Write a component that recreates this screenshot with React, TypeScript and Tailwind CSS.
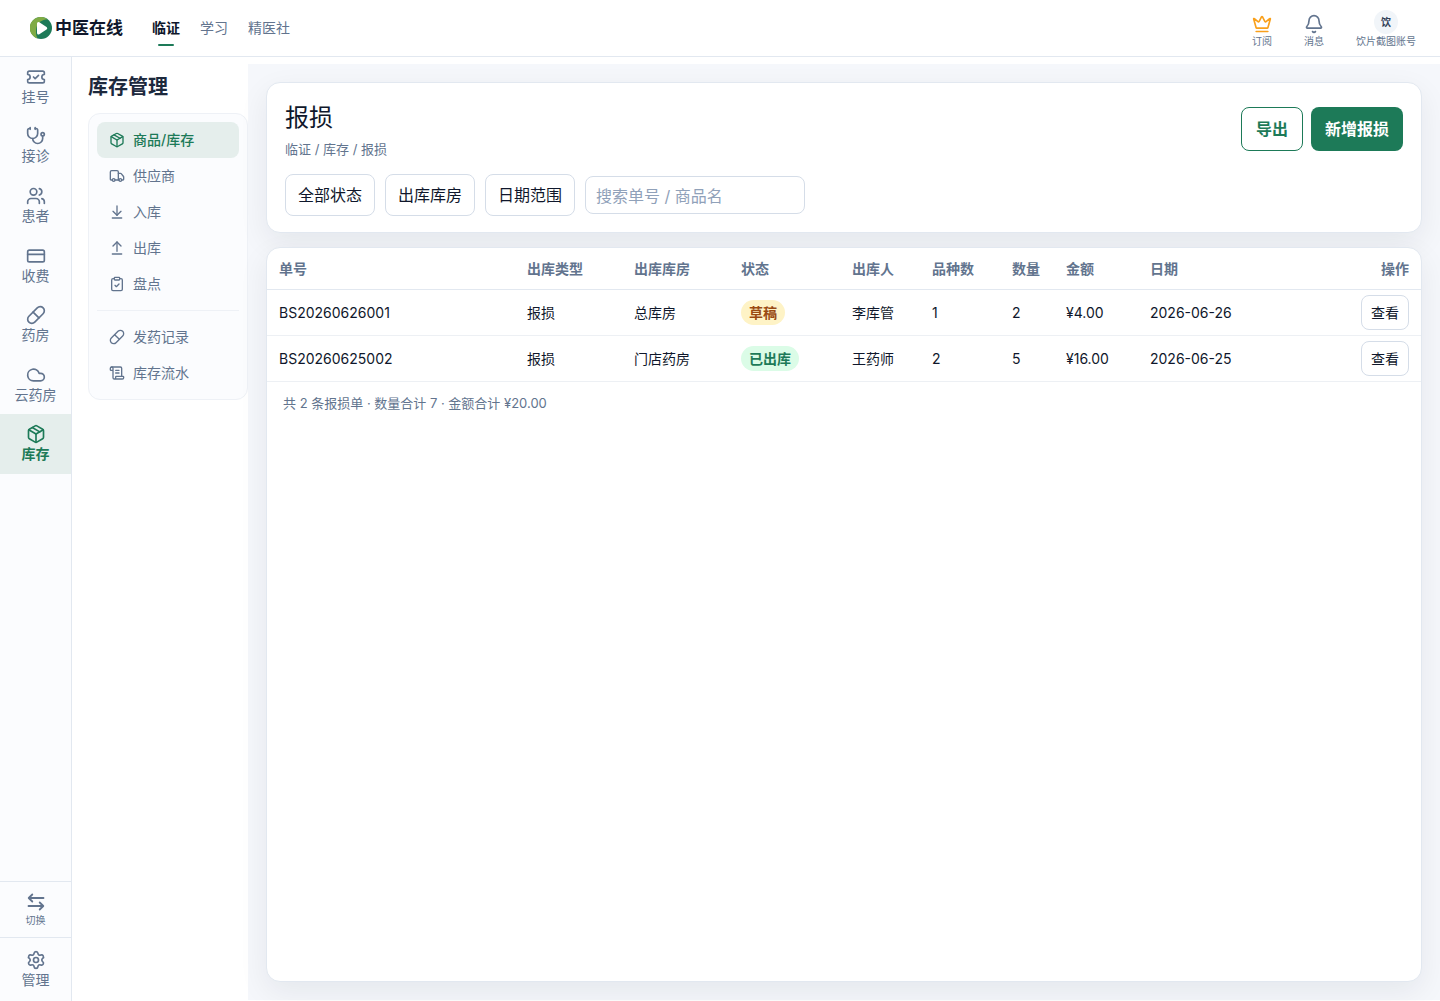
import type { LucideIcon } from 'lucide-react';
import {
  ArrowDownToLine,
  ArrowUpFromLine,
  Bell,
  ClipboardCheck,
  Cloud,
  CreditCard,
  Crown,
  Package,
  Pill,
  ScrollText,
  Settings,
  Stethoscope,
  TicketCheck,
  Truck,
  Users,
} from 'lucide-react';

type NavItem = { label: string; icon: LucideIcon; active?: boolean };

const railItems: NavItem[] = [
  { label: '挂号', icon: TicketCheck },
  { label: '接诊', icon: Stethoscope },
  { label: '患者', icon: Users },
  { label: '收费', icon: CreditCard },
  { label: '药房', icon: Pill },
  { label: '云药房', icon: Cloud },
  { label: '库存', icon: Package, active: true },
];

const stockItems: NavItem[] = [
  { label: '商品/库存', icon: Package, active: true },
  { label: '供应商', icon: Truck },
  { label: '入库', icon: ArrowDownToLine },
  { label: '出库', icon: ArrowUpFromLine },
  { label: '盘点', icon: ClipboardCheck },
];

const recordItems: NavItem[] = [
  { label: '发药记录', icon: Pill },
  { label: '库存流水', icon: ScrollText },
];

const rows = [
  { no: 'BS20260626001', type: '报损', store: '总库房', status: '草稿', draft: true, by: '李库管', kinds: 1, qty: 2, amount: '¥4.00', date: '2026-06-26' },
  { no: 'BS20260625002', type: '报损', store: '门店药房', status: '已出库', draft: false, by: '王药师', kinds: 2, qty: 5, amount: '¥16.00', date: '2026-06-25' },
];

function Logo() {
  return (
    <svg viewBox="0 0 22 22" className="size-[22px]" aria-hidden="true">
      <circle cx="11" cy="11" r="11" fill="#1d7a58" />
      <path d="M17.500 2.200A11 11 0 1 0 7.500 21.400C5.800 18 5.600 14 6.600 10 8 5.500 12 2.500 17.500 2.200Z" fill="#7fab45" />
      <path d="M8.500 6.500v9.400l7.200-4.700Z" fill="#fff" stroke="#fff" strokeWidth="3" strokeLinejoin="round" />
    </svg>
  );
}

function SwitchIcon() {
  return (
    <svg viewBox="0 0 20 20" fill="none" stroke="currentColor" strokeWidth="1.800" strokeLinecap="round" strokeLinejoin="round" className="size-5" aria-hidden="true">
      <path d="M17.500 6H3M6.300 2.500 2.700 6l3.600 3.500M2.500 14H17M13.700 10.500l3.600 3.500-3.600 3.500" />
    </svg>
  );
}

function SideLink({ item }: { item: NavItem }) {
  const Icon = item.icon;
  return (
    <a
      href="#"
      className={`flex h-9 items-center gap-2 rounded-lg px-3 text-sm ${
        item.active ? 'bg-[#e5eeec] font-medium text-[#1d7a58]' : 'text-slate-500'
      }`}
    >
      <Icon className="size-4" strokeWidth={2} />
      {item.label}
    </a>
  );
}

function Header() {
  return (
    <header className="flex h-[57px] shrink-0 items-center border-b border-slate-200 pr-6 pl-[30px]">
      <a href="#" className="flex items-center gap-[3px] text-[17px] leading-7 font-semibold text-slate-900">
        <Logo />
        中医在线
      </a>
      <nav className="ml-[29px] flex gap-5 text-sm">
        <a href="#" className="relative font-bold text-slate-900">
          临证
          <span className="absolute -bottom-2 left-1/2 h-0.5 w-4 -translate-x-1/2 rounded-full bg-[#1d7a58]" />
        </a>
        <a href="#" className="text-slate-500">学习</a>
        <a href="#" className="text-slate-500">精医社</a>
      </nav>
      <div className="ml-auto flex items-end gap-8 pt-px text-[10px] leading-3 text-slate-500">
        <button type="button" className="flex flex-col items-center gap-px">
          <Crown className="size-5 text-[#f9a01b]" strokeWidth={2} />
          订阅
        </button>
        <button type="button" className="flex flex-col items-center gap-px">
          <Bell className="size-5" strokeWidth={2} />
          消息
        </button>
        <button type="button" className="flex flex-col items-center gap-px">
          <span className="flex size-6 items-center justify-center rounded-full bg-slate-100 font-semibold text-slate-700">饮</span>
          饮片截图账号
        </button>
      </div>
    </header>
  );
}

function Rail() {
  return (
    <aside className="flex w-[72px] shrink-0 flex-col border-r border-slate-200 bg-[#fbfcfe] text-sm text-slate-500">
      <nav className="flex h-[417px] flex-col">
        {railItems.map(({ label, icon: Icon, active }) => (
          <a
            key={label}
            href="#"
            className={`flex flex-1 flex-col items-center justify-center ${active ? 'bg-[#e5eeec] font-semibold text-[#1d7a58]' : ''}`}
          >
            <Icon className="size-5" strokeWidth={2} />
            {label}
          </a>
        ))}
      </nav>
      <button type="button" className="mt-auto flex h-14 flex-col items-center justify-center gap-0.5 border-t border-slate-200 pb-0.5 text-[10px] leading-3">
        <SwitchIcon />
        切换
      </button>
      <a href="#" className="flex h-16 flex-col items-center justify-center border-t border-slate-200">
        <Settings className="size-5" strokeWidth={2} />
        管理
      </a>
    </aside>
  );
}

function StockMenu() {
  return (
    <aside className="w-44 shrink-0 pt-4 pl-4">
      <h2 className="text-xl leading-7 font-semibold text-slate-800">库存管理</h2>
      <nav className="mt-3 rounded-xl border border-[#eef1f6] bg-[#fbfcfe] p-2">
        {stockItems.map((item) => (
          <SideLink key={item.label} item={item} />
        ))}
        <hr className="my-2 border-[#eef1f6]" />
        {recordItems.map((item) => (
          <SideLink key={item.label} item={item} />
        ))}
      </nav>
    </aside>
  );
}

const card = 'rounded-[14px] border border-slate-200 bg-white shadow-[0_10px_30px_rgba(15,23,42,0.07)]';
const filterButton = 'h-[42px] rounded-lg border border-[#d5dde8] px-3';

function Toolbar() {
  return (
    <section className={`${card} px-[18px] py-4`}>
      <div className="flex items-start justify-between">
        <div>
          <h1 className="text-2xl leading-[38px]">报损</h1>
          <p className="text-[13px] leading-6 text-slate-500">临证 / 库存 / 报损</p>
        </div>
        <div className="flex gap-2 pt-2 font-bold">
          <button type="button" className="h-11 rounded-lg border border-[#1d7a58] px-3.5 text-[#1d7a58]">导出</button>
          <button type="button" className="h-11 rounded-lg bg-[#1d7a58] px-3.5 text-white">新增报损</button>
        </div>
      </div>
      <div className="mt-[13px] flex items-center gap-2.5">
        <button type="button" className={filterButton}>全部状态</button>
        <button type="button" className={filterButton}>出库库房</button>
        <button type="button" className={filterButton}>日期范围</button>
        <input
          type="text"
          aria-label="搜索单号或商品名"
          placeholder="搜索单号 / 商品名"
          className="h-[38px] w-[220px] rounded-lg border border-[#d5dde8] px-2.5 pt-0.5 placeholder:text-slate-400"
        />
      </div>
    </section>
  );
}

function LossTable() {
  return (
    <section className={`${card} flex-1 overflow-hidden`}>
      <table className="w-full table-fixed border-separate border-spacing-0 text-left text-sm">
        <thead>
          <tr className="h-[42px] text-slate-500 *:border-b *:border-slate-200 *:px-3 *:font-semibold">
            <th className="w-[248px]">单号</th>
            <th className="w-[107px]">出库类型</th>
            <th className="w-[107px]">出库库房</th>
            <th className="w-[111px]">状态</th>
            <th className="w-20">出库人</th>
            <th className="w-20">品种数</th>
            <th className="w-[54px]">数量</th>
            <th className="w-[84px]">金额</th>
            <th className="w-[120px]">日期</th>
            <th className="text-right">操作</th>
          </tr>
        </thead>
        <tbody>
          {rows.map((row) => (
            <tr key={row.no} className="h-[46px] *:border-b *:border-[#edf0f4] *:px-3">
              <td>{row.no}</td>
              <td>{row.type}</td>
              <td>{row.store}</td>
              <td>
                <span
                  className={`inline-block rounded-full px-2 leading-[25px] font-semibold ${
                    row.draft ? 'bg-amber-100 text-[#9a4a12]' : 'bg-green-100 text-[#1d7a58]'
                  }`}
                >
                  {row.status}
                </span>
              </td>
              <td>{row.by}</td>
              <td>{row.kinds}</td>
              <td>{row.qty}</td>
              <td>{row.amount}</td>
              <td>{row.date}</td>
              <td className="text-right">
                <button type="button" className="h-[35px] rounded-lg border border-[#d5dde8] px-[9px]">查看</button>
              </td>
            </tr>
          ))}
        </tbody>
      </table>
      <p className="px-4 py-[11px] text-[13px] leading-5 text-slate-500">共 2 条报损单 · 数量合计 7 · 金额合计 ¥20.00</p>
    </section>
  );
}

export default function App() {
  return (
    <div className="flex min-h-screen flex-col bg-white font-['Inter','Noto_Sans_CJK_SC',sans-serif] text-slate-900">
      <Header />
      <div className="flex flex-1">
        <Rail />
        <StockMenu />
        <main className="mt-[7px] mb-px flex min-w-0 flex-1 flex-col gap-3.5 bg-[#f5f7fb] p-[18px]">
          <Toolbar />
          <LossTable />
        </main>
      </div>
    </div>
  );
}
